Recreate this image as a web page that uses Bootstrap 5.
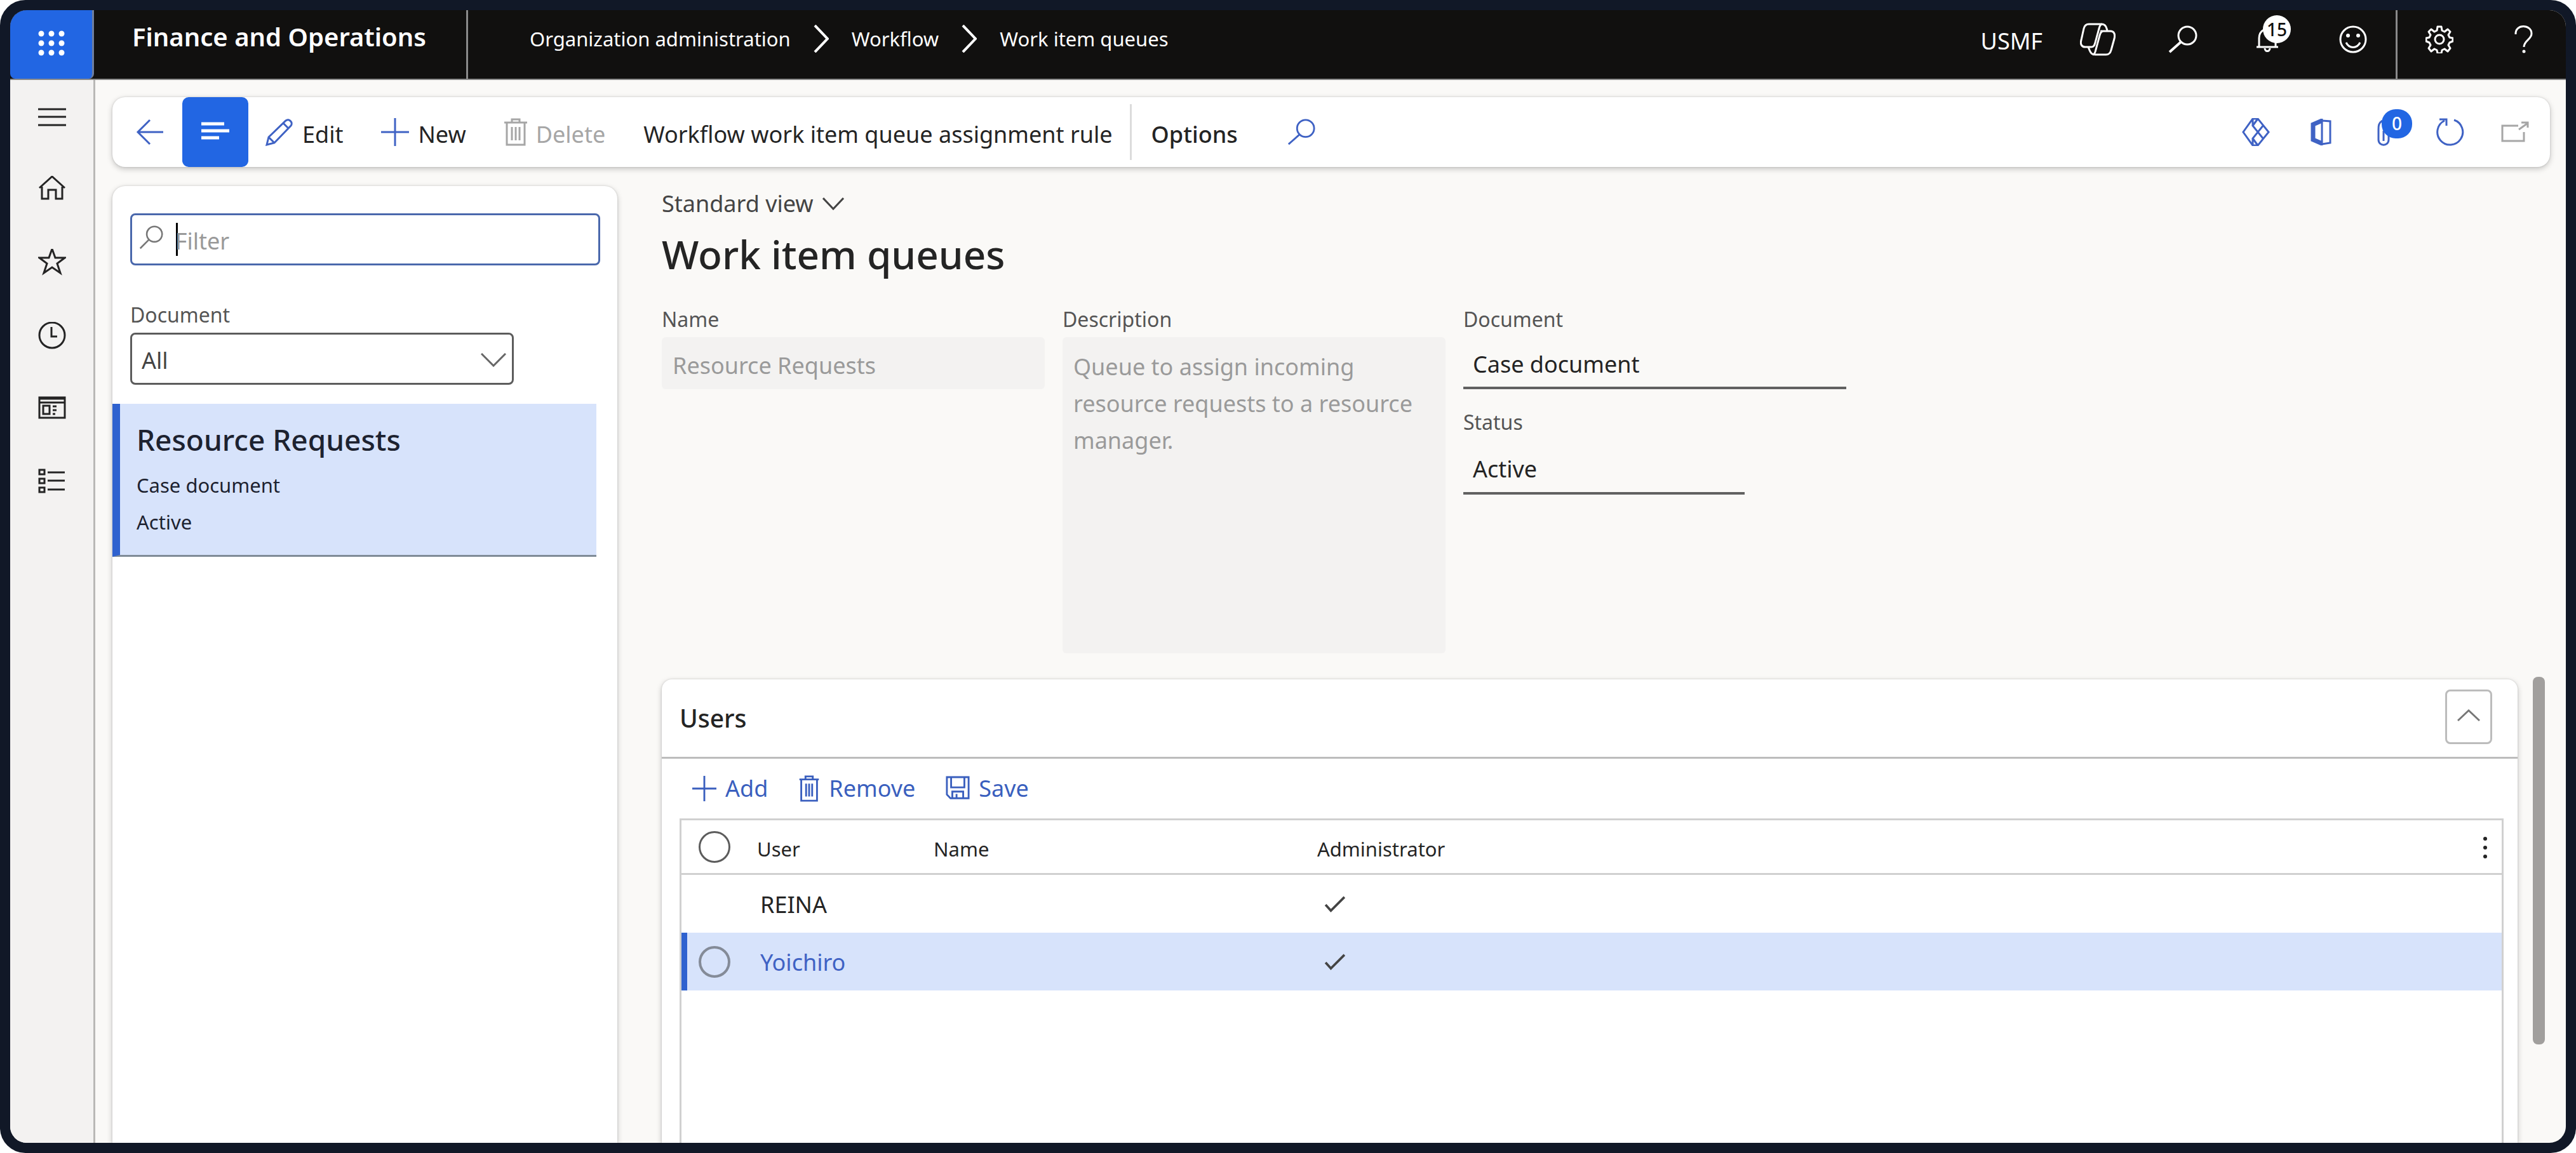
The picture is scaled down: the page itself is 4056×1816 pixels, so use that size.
<!DOCTYPE html>
<html lang="en">
<head>
<meta charset="utf-8">
<meta name="viewport" content="width=device-width, initial-scale=1">
<title>Work item queues - Finance and Operations</title>
<link href="https://cdn.jsdelivr.net/npm/bootstrap@5.3.0/dist/css/bootstrap.min.css" rel="stylesheet">
<style>
  :root { --brand: #2266e3; --ink: #242424; --soft: #555; --select: #d7e3fb; --hair: #d0d0d0; }
  body { background: #fff; color: var(--ink); font-family: "Noto Sans", "Open Sans", sans-serif; font-size: 36px; line-height: 48px; }
  svg { display: block; flex: none; fill: none; stroke: currentColor; stroke-width: 3; width: 44px; height: 44px; }
  .btn { --bs-btn-padding-x: 0; --bs-btn-padding-y: 0; --bs-btn-font-size: 36px; --bs-btn-line-height: 48px; --bs-btn-border-width: 0; --bs-btn-color: var(--ink); --bs-btn-border-radius: 0; --bs-btn-disabled-color: #a6a6a6; --bs-btn-disabled-opacity: 1; }
  a { color: inherit; text-decoration: none; }
  .field-label { font-size: 32px; line-height: 40px; margin-bottom: 8px; color: var(--soft); }

  .app-window { min-height: 100vh; border: 16px solid #111827; border-radius: 40px; background: #111827; }
  .app-inner { border-radius: 26px; overflow: hidden; background: #faf9f7; }

  .topbar { height: 110px; background: #11100f; color: #fff; border-bottom: 2px solid #8a8a8a; }
  .topbar .btn { --bs-btn-color: #fff; }
  .launcher { width: 132px; background: var(--brand); border-radius: 0 0 8px 8px; border-right: 3px solid #6f7f9f; }
  .product { width: 589px; padding-left: 60px; padding-bottom: 24px; font-size: 40px; font-weight: 600; border-right: 3px solid #8a8a8a; }
  .crumbs { gap: 36px; padding: 0 0 18px 97px; margin: 0; font-size: 31px; list-style: none; }
  .crumbs svg { width: 24px; }
  .crumbs li { gap: 36px; }
  .company { padding: 0 20px 10px 0; }
  .top-action.btn { width: 134px; padding-bottom: 16px; }
  .top-action.split { border-left: 3px solid #8a8a8a; }
  .round-badge { min-width: 44px; height: 44px; border-radius: 22px; font-size: 28px; line-height: 44px; font-weight: 500; text-align: center; }
  .bell-badge { left: 14px; top: -16px; background: #fff; color: #11100f; }
  .clip-badge { left: 16px; top: -14px; width: 48px; height: 46px; background: var(--brand); color: #fff; }

  .sidenav { width: 134px; background: #f3f2f1; border-right: 3px solid #b9b8b6; }
  .sidenav .btn { height: 115px; width: 131px; }

  .raised { background: #fff; box-shadow: 0 3px 10px rgba(0,0,0,.22), 0 0 3px rgba(0,0,0,.14); }
  .workspace { padding-top: 27px; }
  .commandbar { height: 110px; margin: 0 25px 0 27px; border-radius: 20px; }
  .commandbar .btn { gap: 14px; height: 110px; }
  .commandbar .btn span.cmd { padding-top: 8px; }
  .commandbar .blue svg, .tint { color: #3f62c4; }
  .back.btn { width: 110px; padding-left: 8px; }
  .list-toggle.btn { width: 104px; background: var(--brand); color: #fff; border-radius: 10px; }
  .cmds { gap: 60px; padding-left: 27px; }
  .v-rule { width: 3px; height: 88px; background: #dcdcdc; margin: 0 31px 0 27px; }
  .find.btn { margin-left: 77px; }
  .tool.btn { width: 102px; }

  .list-pane { width: 795px; flex: none; margin: 30px 0 0 27px; padding-top: 43px; border-radius: 20px 20px 0 0; }
  .filter-box { width: 740px; height: 82px; margin: 0 0 58px 28px; border: 3px solid #4a68ac; border-radius: 8px; padding-left: 11px; }
  .filter-box svg { width: 38px; height: 38px; color: #777; stroke-width: 3; margin: 0 20px 6px 0; }
  .caret-bar { width: 3px; height: 52px; background: #000; margin-right: -4px; }
  .filter-box input { font-size: 36px; line-height: 48px; border: 0; padding: 6px 0 0; background: transparent; color: var(--ink); }
  .filter-box input::placeholder { color: #999; }
  .doc-pick { width: 604px; margin: 0 0 30px 28px; }
  .doc-pick .form-select { height: 82px; font-size: 36px; line-height: 48px; padding: 6px 60px 0 15px; border: 3px solid #5c5c5c; border-radius: 8px; color: #444; background: #fff; }
  .doc-pick svg { right: 12px; top: 32px; width: 40px; height: 22px; color: #666; }
  .record { width: 762px; background: var(--select); border-left: 12px solid #2f62cf; border-bottom: 3px solid #7f8b97; padding: 26px 0 23px 26px; color: #1d2230; }
  .record h2 { font-size: 46px; line-height: 60px; font-weight: 500; margin: 0 0 13px; }
  .record p { font-size: 31px; line-height: 58px; margin: 0; }

  .detail { padding: 34px 33px 0 70px; }
  .view-pick.btn { gap: 14px; color: #444; }
  .view-pick svg { width: 34px; height: 20px; }
  .detail h1 { font-size: 62px; line-height: 72px; font-weight: 500; margin: 19px 0 47px; }
  .fields { gap: 28px; margin-bottom: 41px; }
  .field-col { width: 603px; }
  .field-col .form-control { font-size: 36px; height: 82px; padding: 6px 17px 0; border: 0; border-radius: 6px; line-height: 48px; }
  .field-col .form-control:disabled { background: #f3f2f1; color: #9a9a9a; opacity: 1; -webkit-text-fill-color: #9a9a9a; }
  .field-col textarea.form-control { height: 498px; line-height: 58px; padding-top: 18px; resize: none; }
  .field-col .form-control.lined { border-bottom: 4px solid #616161; border-radius: 0; background: transparent; color: var(--ink); padding-left: 15px; }
  .field-col .form-control.status-in { width: 443px; height: 86px; padding-top: 8px; }

  .users { border: 0; border-radius: 16px 16px 0 0; }
  .users-head { height: 125px; padding: 0 40px 0 28px; border-bottom: 3px solid #bcbcbc; }
  .users-head h2 { font-size: 39px; line-height: 48px; font-weight: 500; margin: 0; }
  .collapse-btn.btn { width: 74px; height: 86px; border: 3px solid #bcbcbc; border-radius: 8px; color: #777; }
  .users-tools { gap: 48px; padding: 0 0 0 48px; height: 94px; color: #3a5fbe; }
  .users-tools .btn { color: inherit; gap: 14px; }
  .users-tools svg { width: 38px; height: 42px; }
  .users-tools .bin { width: 34px; }
  .grid-wrap { margin: 0 22px 0 28px; border: 3px solid var(--hair); border-bottom: 0; }
  .grid { table-layout: fixed; margin: 0; --bs-table-bg: transparent; --bs-table-color: var(--ink); border-collapse: separate; border-spacing: 0; }
  .grid > :not(caption) > * > * { padding: 0; border: 0; box-shadow: none; vertical-align: middle; }
  .grid > thead > tr > th { height: 86px; font-size: 31px; font-weight: 400; padding-top: 6px; border-bottom: 3px solid var(--hair); }
  .grid tbody td { height: 91px; }
  .grid > tbody > tr > td.txt { padding: 3px 0 0 5px; }
  .grid tr.picked { background: var(--select); }
  .grid > tbody > tr.picked > td:first-child { border-left: 9px solid #2f62cf; }
  .grid .form-check-input { display: block; width: 50px; height: 50px; margin: 0 0 0 27px; border: 3px solid #5c5c5c; background: transparent; }
  .grid thead .form-check-input { margin-top: -6px; }
  .grid tr.picked .form-check-input { margin-left: 18px; border: 4px solid #848b98; }
  .grid td svg { width: 34px; height: 26px; margin-left: 11px; stroke-width: 4; color: #444; }
  .kebab.btn svg { width: 10px; height: 44px; fill: currentColor; stroke: none; }
  .scroll-thumb { width: 19px; height: 579px; margin: -4px 0 0 24px; border-radius: 8px; background: #a19f9d; flex: none; }
</style>
<script src="https://cdn.jsdelivr.net/npm/bootstrap@5.3.0/dist/js/bootstrap.bundle.min.js"></script>
</head>
<body>
<div class="app-window d-flex">
<div class="app-inner d-flex flex-column flex-grow-1">

  <header class="topbar d-flex align-items-stretch">
    <button class="launcher btn d-flex align-items-center justify-content-center" aria-label="App launcher">
      <svg viewBox="0 0 44 44"><g fill="#fff" stroke="none"><circle cx="6" cy="5" r="4.5"/><circle cx="22" cy="5" r="4.5"/><circle cx="38" cy="5" r="4.5"/><circle cx="6" cy="20" r="4.5"/><circle cx="22" cy="20" r="4.5"/><circle cx="38" cy="20" r="4.5"/><circle cx="6" cy="35" r="4.5"/><circle cx="22" cy="35" r="4.5"/><circle cx="38" cy="35" r="4.5"/></g></svg>
    </button>
    <a href="#" class="product d-flex align-items-center">Finance and Operations</a>
    <nav aria-label="Breadcrumb" class="d-flex">
      <ol class="crumbs d-flex align-items-center">
        <li class="d-flex align-items-center"><a href="#">Organization administration</a><svg viewBox="0 0 24 44"><path d="M2 1 22 22 2 43" stroke-width="4"/></svg></li>
        <li class="d-flex align-items-center"><a href="#">Workflow</a><svg viewBox="0 0 24 44"><path d="M2 1 22 22 2 43" stroke-width="4"/></svg></li>
        <li><a href="#" aria-current="page">Work item queues</a></li>
      </ol>
    </nav>
    <div class="d-flex align-items-stretch ms-auto">
      <button class="company btn">USMF</button>
      <button class="top-action btn d-flex align-items-center justify-content-center" aria-label="Copilot">
        <svg viewBox="0 0 56 52" style="width:56px;height:52px"><path d="M14 2h20c5 0 7 3 8 7l1 3"/><path d="M14 2C9 2 7 5 6 9L2 27c-2 7 1 11 6 11h10c4 0 5-3 6-7l6-22c1-4 2-7 5-7"/><path d="M13 38l2 5c2 5 4 7 9 7h17c5 0 7-3 8-7l5-18c2-8-1-12-6-12H37c-4 0-5 3-6 7l-6 22c-1 5-2 8-5 8M32 13h10"/></svg>
      </button>
      <button class="top-action btn d-flex align-items-center justify-content-center" aria-label="Search">
        <svg viewBox="0 0 48 44" style="width:48px"><circle cx="31" cy="16" r="14"/><path d="M21 26 3 42" stroke-width="4"/></svg>
      </button>
      <button class="top-action btn d-flex align-items-center justify-content-center" aria-label="Notifications">
        <span class="position-relative">
          <svg viewBox="0 0 44 44"><path d="M4 34h34M8 34V20c0-9 6-14 13-14s13 5 13 14v14M17 36c0 6 8 6 8 0" /></svg>
          <span class="round-badge bell-badge position-absolute">15</span>
        </span>
      </button>
      <button class="top-action btn d-flex align-items-center justify-content-center" aria-label="Feedback">
        <svg viewBox="0 0 44 44"><circle cx="22" cy="22" r="20"/><path d="M11 27c5 10 17 10 22 0"/><g fill="currentColor" stroke="none"><circle cx="14" cy="16" r="3"/><circle cx="30" cy="16" r="3"/></g></svg>
      </button>
      <button class="top-action split btn d-flex align-items-center justify-content-center" aria-label="Settings">
        <svg viewBox="0 0 44 44"><path d="M19 2h6l1 6 4 2 5-4 4 4-3 5 2 4 5 1v5l-5 2-2 4 3 5-4 5-5-4-4 2-1 5h-6l-1-5-4-2-5 4-4-5 3-5-2-4-5-2v-5l5-1 2-4-3-5 4-4 5 4 4-2z" stroke-linejoin="round"/><circle cx="22" cy="22" r="7"/></svg>
      </button>
      <button class="top-action btn d-flex align-items-center justify-content-center" aria-label="Help">
        <svg viewBox="0 0 44 44"><path d="M10 14C9-3 35-2 35 13c0 9-12 11-12 21"/><circle cx="23" cy="41" r="2.5" fill="currentColor" stroke="none"/></svg>
      </button>
    </div>
  </header>

  <div class="d-flex flex-grow-1">
    <nav class="sidenav d-flex flex-column flex-shrink-0" aria-label="Main">
      <button class="btn d-flex align-items-center justify-content-center" aria-label="Expand"><svg viewBox="0 0 44 44"><path d="M0 10h44M0 22h44M0 35h44"/></svg></button>
      <button class="btn d-flex align-items-center justify-content-center" aria-label="Home"><svg viewBox="0 0 44 44"><path d="M2 19 22 1l20 18M6 17v19h10V22h12v14h10V17"/></svg></button>
      <button class="btn d-flex align-items-center justify-content-center" aria-label="Favorites"><svg viewBox="0 0 44 44"><path d="m22 0 5 14h15L30 23l5 15-13-9-13 9 5-15L2 14h15z"/></svg></button>
      <button class="btn d-flex align-items-center justify-content-center" aria-label="Recent"><svg viewBox="0 0 44 44"><circle cx="22" cy="21" r="20"/><path d="M21 8v15h9"/></svg></button>
      <button class="btn d-flex align-items-center justify-content-center" aria-label="Workspaces"><svg viewBox="0 0 44 44"><path d="M2 4h40v32H2zM2 6h40M2 12h40M8 17h10v13H8zM23 18h6M23 24h6M23 30h4"/></svg></button>
      <button class="btn d-flex align-items-center justify-content-center" aria-label="Modules"><svg viewBox="0 0 44 44"><path d="M2 3h8v7H2zM2 17h8v7H2zM2 31h8v7H2zM15 7h27M15 20h27M15 34h27"/></svg></button>
    </nav>

    <div class="workspace d-flex flex-column flex-grow-1">
      <div class="commandbar raised d-flex align-items-center" role="toolbar" aria-label="Actions">
        <button class="back btn blue d-flex align-items-center justify-content-center" aria-label="Back"><svg viewBox="0 0 44 44"><path d="M22 3 3 22l19 19M3 22h40"/></svg></button>
        <button class="list-toggle btn d-flex align-items-center justify-content-center" aria-label="Show list"><svg viewBox="0 0 44 44"><path d="M0 9h36M0 20h44M0 31h28" stroke-width="5"/></svg></button>
        <div class="cmds d-flex">
          <button class="btn blue d-flex align-items-center"><svg viewBox="0 0 44 44"><path d="m2 42 3-12L32 4c5-4 12 3 8 8L14 39zM5 30l9 9M28 8l8 8"/></svg><span class="cmd">Edit</span></button>
          <button class="btn blue d-flex align-items-center"><svg viewBox="0 0 44 44"><path d="M22 0v44M0 22h44"/></svg><span class="cmd">New</span></button>
          <button class="btn d-flex align-items-center" disabled><svg viewBox="0 0 36 44" style="width:36px"><path d="M0 7h36M12 7V2h12v5M4 7v35h28V7M12 14v21M18 14v21M24 14v21"/></svg><span class="cmd">Delete</span></button>
          <button class="btn d-flex align-items-center"><span class="cmd">Workflow work item queue assignment rule</span></button>
        </div>
        <div class="v-rule"></div>
        <button class="btn d-flex align-items-center fw-medium"><span class="cmd">Options</span></button>
        <button class="find btn blue d-flex align-items-center" aria-label="Search actions"><svg viewBox="0 0 48 44" style="width:46px"><circle cx="31" cy="16" r="14"/><path d="M21 26 3 42"/></svg></button>
        <div class="d-flex ms-auto pe-1">
          <button class="tool btn blue d-flex align-items-center justify-content-center" aria-label="Power Apps"><svg viewBox="0 0 44 44"><path d="M17 1h8l17 21-17 21h-8L2 22zM25 1l-8 11 17 21M17 1v11M25 43l-8-11L34 11M17 43V32"/></svg></button>
          <button class="tool btn blue d-flex align-items-center justify-content-center" aria-label="Open in Office"><svg viewBox="0 0 44 44"><path d="M24 4 10 10v24l14 6" stroke-width="7"/><path d="M24 1v42M24 4l13 1v34l-13 2"/></svg></button>
          <button class="tool btn blue d-flex align-items-center justify-content-center" aria-label="Attachments">
            <span class="position-relative"><svg viewBox="0 0 44 44"><path d="M17 4c-6 4-6 8-6 14v16c0 11 16 11 16 0V12M19 36V20"/></svg><span class="round-badge clip-badge position-absolute">0</span></span>
          </button>
          <button class="tool btn blue d-flex align-items-center justify-content-center" aria-label="Refresh"><svg viewBox="0 0 44 44"><path d="M28 3a20 20 0 1 1-15 1M5 2h11v10"/></svg></button>
          <button class="tool btn d-flex align-items-center justify-content-center" aria-label="Open in new window" disabled><svg viewBox="0 0 44 44"><path d="M27 12H2v24h34V22M28 18 42 8M32 7h10v8"/></svg></button>
        </div>
      </div>

      <div class="d-flex flex-grow-1">
        <aside class="list-pane raised">
          <div class="filter-box d-flex align-items-center">
            <svg viewBox="0 0 44 44"><circle cx="28" cy="16" r="14"/><path d="M18 26 2 42"/></svg>
            <span class="caret-bar"></span>
            <input class="form-control shadow-none" type="text" placeholder="Filter" aria-label="Filter">
          </div>
          <div class="doc-pick">
            <label for="docPick" class="field-label d-block">Document</label>
            <div class="position-relative">
              <select id="docPick" class="form-select"><option>All</option></select>
              <svg class="position-absolute pe-none" viewBox="0 0 40 22"><path d="M1 1 20 20 39 1"/></svg>
            </div>
          </div>
          <a href="#" class="record d-block">
            <h2>Resource Requests</h2>
            <p>Case document</p>
            <p>Active</p>
          </a>
        </aside>

        <main class="detail d-flex flex-column flex-grow-1">
          <button class="view-pick btn d-flex align-items-center align-self-start">Standard view <svg viewBox="0 0 34 20"><path d="M1 1 17 18 33 1"/></svg></button>
          <h1>Work item queues</h1>
          <div class="fields d-flex align-items-start">
            <div class="field-col">
              <label for="fName" class="field-label d-block">Name</label>
              <input id="fName" class="form-control" value="Resource Requests" disabled>
            </div>
            <div class="field-col">
              <label for="fDesc" class="field-label d-block">Description</label>
              <textarea id="fDesc" class="form-control" disabled>Queue to assign incoming resource requests to a resource manager.</textarea>
            </div>
            <div class="field-col">
              <label for="fDoc" class="field-label d-block">Document</label>
              <input id="fDoc" class="form-control lined mb-4" value="Case document" readonly>
              <label for="fStatus" class="field-label d-block pt-2">Status</label>
              <input id="fStatus" class="form-control lined status-in" value="Active" readonly>
            </div>
          </div>

          <div class="d-flex flex-grow-1">
            <section class="users card raised flex-grow-1">
              <div class="users-head d-flex align-items-center justify-content-between">
                <h2>Users</h2>
                <button class="collapse-btn btn d-flex align-items-center justify-content-center mb-1" aria-label="Collapse"><svg viewBox="0 0 36 44" style="width:36px"><path d="M1 28 18 12 35 28"/></svg></button>
              </div>
              <div class="users-tools d-flex align-items-center">
                <button class="btn d-flex align-items-center"><svg viewBox="0 0 40 44"><path d="M20 1v42M0 22h40"/></svg>Add</button>
                <button class="btn d-flex align-items-center"><svg class="bin" viewBox="0 0 34 44"><path d="M1 7h32M11 7V2h12v5M4 7v35h26V7M12 14v21M17 14v21M22 14v21"/></svg>Remove</button>
                <button class="btn d-flex align-items-center"><svg viewBox="0 0 40 44"><path d="M2 3h36v35H8l-6-6zM9 3v17h22V3M11 38V27h18v11M18 31v7"/></svg>Save</button>
              </div>
              <div class="grid-wrap flex-grow-1">
                <table class="grid table">
                  <colgroup><col style="width:119px"><col style="width:278px"><col style="width:604px"><col><col style="width:52px"></colgroup>
                  <thead>
                    <tr>
                      <th><input class="form-check-input" type="radio" name="all" aria-label="Select all"></th>
                      <th scope="col">User</th><th scope="col">Name</th><th scope="col">Administrator</th>
                      <th><button class="kebab btn d-flex justify-content-center w-100" aria-label="Grid options"><svg viewBox="0 0 10 44"><circle cx="5" cy="6" r="3"/><circle cx="5" cy="20" r="3"/><circle cx="5" cy="34" r="3"/></svg></button></th>
                    </tr>
                  </thead>
                  <tbody>
                    <tr><td></td><td class="txt">REINA</td><td></td><td><svg viewBox="0 0 36 28" role="img" aria-label="Yes"><path d="m2 15 9 10L34 2"/></svg></td><td></td></tr>
                    <tr class="picked"><td><input class="form-check-input" type="radio" name="row" aria-label="Select Yoichiro"></td><td class="txt tint">Yoichiro</td><td></td><td><svg viewBox="0 0 36 28" role="img" aria-label="Yes"><path d="m2 15 9 10L34 2"/></svg></td><td></td></tr>
                  </tbody>
                </table>
              </div>
            </section>
            <div class="scroll-thumb"></div>
          </div>
        </main>
      </div>
    </div>
  </div>
</div>
</div>
</body>
</html>
